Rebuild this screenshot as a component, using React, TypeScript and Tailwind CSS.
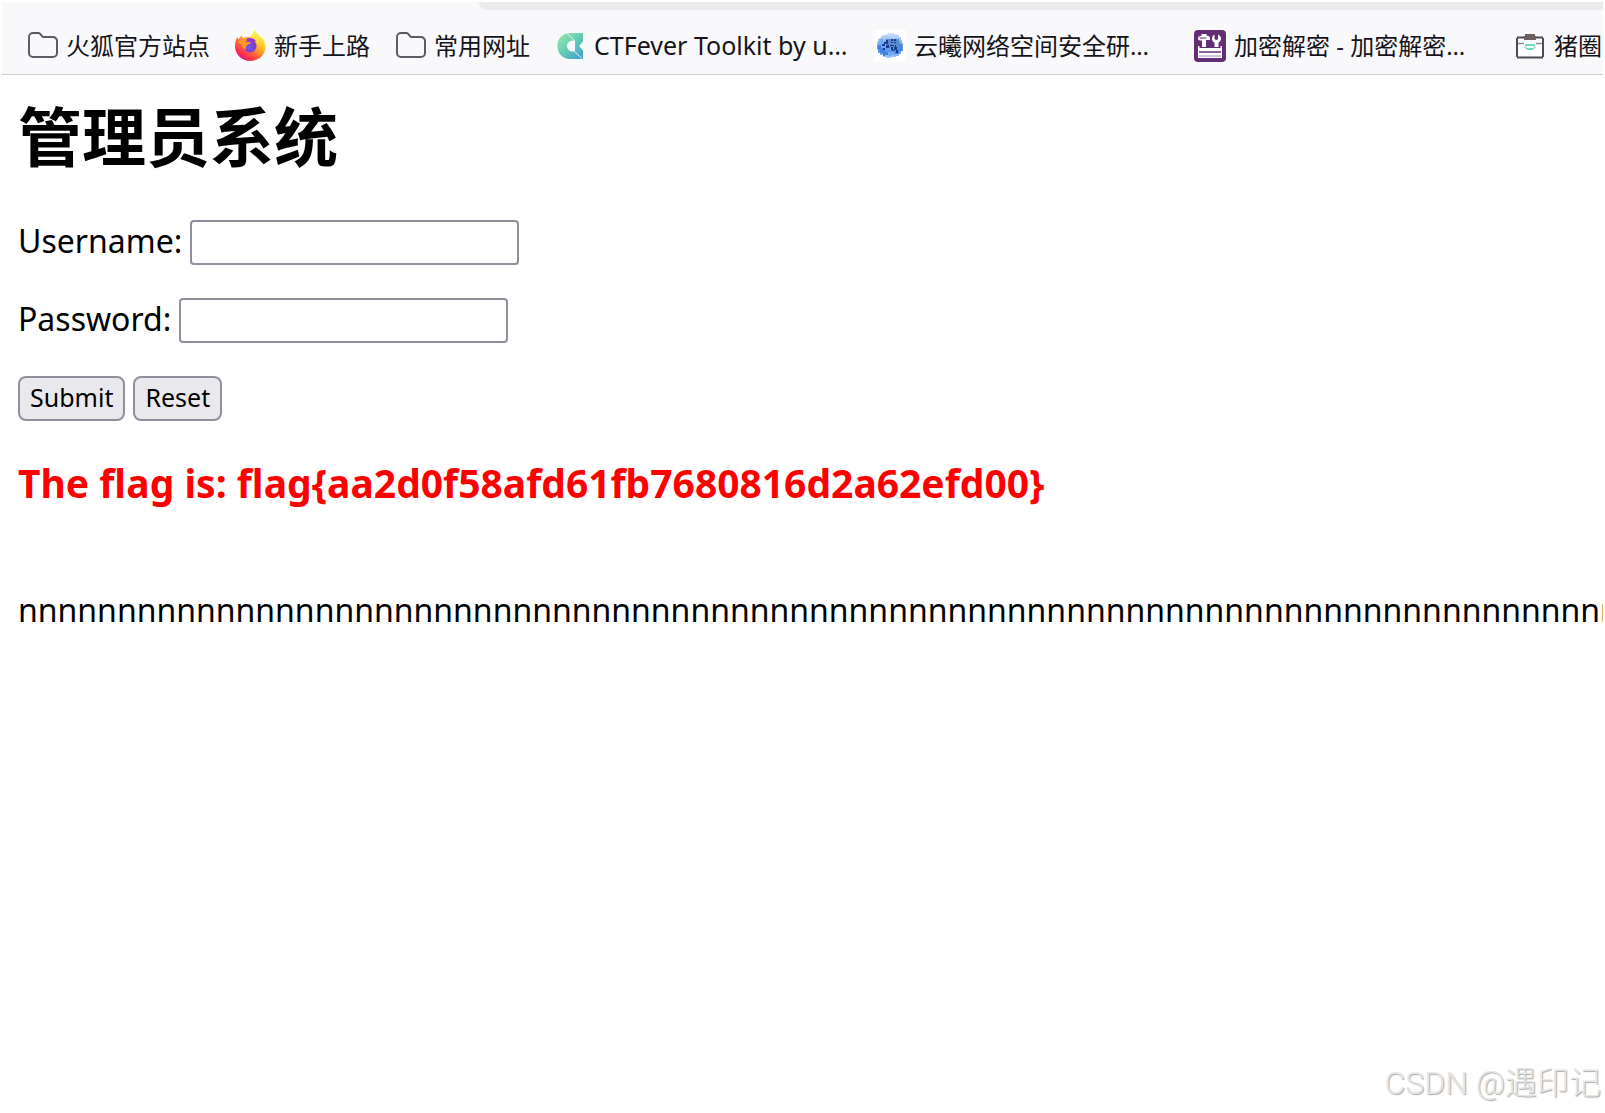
import type { ReactNode } from 'react';

function FolderIcon() {
    return (
        <svg viewBox="0 0 32 32" className="size-8" fill="none" aria-hidden="true">
            <path
                d="M7 3h5.2c.8 0 1.5.3 2 .9l2.2 2.7c.3.3.6.4 1 .4H27a4 4 0 0 1 4 4v12a4 4 0 0 1-4 4H7a4 4 0 0 1-4-4V7a4 4 0 0 1 4-4Z"
                stroke="#5b5b66"
                strokeWidth="2"
            />
        </svg>
    );
}

function FirefoxIcon() {
    return (
        <svg viewBox="0 0 32 32" className="size-8" aria-hidden="true">
            <defs>
                <linearGradient id="fx-body" x1="26" y1="5" x2="8" y2="29" gradientUnits="userSpaceOnUse">
                    <stop offset="0" stopColor="#fff44f" />
                    <stop offset=".35" stopColor="#ffb52b" />
                    <stop offset=".6" stopColor="#ff6a37" />
                    <stop offset=".85" stopColor="#ff2f4f" />
                    <stop offset="1" stopColor="#e31587" />
                </linearGradient>
                <linearGradient id="fx-flame" x1="22" y1="0" x2="25" y2="26" gradientUnits="userSpaceOnUse">
                    <stop offset="0" stopColor="#fff44f" />
                    <stop offset=".5" stopColor="#ffd83a" />
                    <stop offset="1" stopColor="#ff8a16" />
                </linearGradient>
                <radialGradient id="fx-globe" cx=".45" cy=".6" r=".6">
                    <stop offset="0" stopColor="#6d5cf0" />
                    <stop offset=".6" stopColor="#7a43d8" />
                    <stop offset="1" stopColor="#9a2fc0" />
                </radialGradient>
            </defs>
            <path
                d="M3.500 7c.3 1 .7 1.700 1.200 2.200C5.700 7.600 6.600 6.500 8 5.500c0 1 .3 1.900.9 2.500 2-.9 5.200-1.600 8.300-1.100C18 4.400 19.500 2.200 20.600 0c1.200 2.800 2.800 4.200 4.900 6 .8.700 1.500 1.700 2 2.800.2-.5.1-1.200-.1-1.700 2.500 2.400 4.100 6 4.100 9.700C31.500 25 24.800 31 16.300 31 7.800 31 1 24.700 1 16.300 1 13 1.900 9.600 3.500 7Z"
                fill="url(#fx-body)"
            />
            <path
                d="M20.600 0c1.200 2.800 2.800 4.200 4.900 6 2.600 3 4.200 6.700 3.600 10.700-.5 4-2.700 7.100-6.100 8.900 2.500-3.500 2.900-8 .6-11.200-1.700-2.500-4.500-3.700-6.400-7.500C18 4.400 19.500 2.200 20.600 0Z"
                fill="url(#fx-flame)"
            />
            <circle cx="16" cy="16" r="6.500" fill="url(#fx-globe)" />
            <path
                d="M4 11.500c2.500-2 6-1.500 8 .3 2-.2 3.600 0 5.300.5-1 1.700-3.300 1.700-4.600 3.200-1 1.200-.5 2.800-1 4-2.400-.7-3.800-2.500-3.500-5-1.700-.2-3.500-1.300-4.200-3Z"
                fill="#ff9a28"
            />
            <path d="M12 9.500c3-2.500 8.500-1.500 10.500 2.200-1.700-.8-3.400-.6-4.600.2-1.600-.6-4.700-1-5.900-2.400Z" fill="#9238d0" />
        </svg>
    );
}

function FeverIcon() {
    return (
        <svg viewBox="0 0 32 32" className="size-8" aria-hidden="true">
            <defs>
                <linearGradient id="fever" x1="6" y1="4" x2="28" y2="28" gradientUnits="userSpaceOnUse">
                    <stop offset="0" stopColor="#94e7ab" />
                    <stop offset=".5" stopColor="#62cbb4" />
                    <stop offset="1" stopColor="#3fa2d0" />
                </linearGradient>
            </defs>
            <path
                d="M16 3h13v8.500L25 16l4 4.500V29H16C8.500 29 3.500 23.500 3.500 16S8.500 3 16 3Zm5 7.500h-2.500a5.500 5.500 0 0 0 0 11H21Z"
                fill="url(#fever)"
                fillRule="evenodd"
            />
            <path d="m13 3.500 7.500 7M20.500 21.500l7.500 7" stroke="#e3f7ef" strokeWidth="1" />
        </svg>
    );
}

function CloudLabIcon() {
    return (
        <svg viewBox="0 0 32 32" className="size-8" aria-hidden="true">
            <defs>
                <linearGradient id="cloud" x1="16" y1="3" x2="16" y2="29" gradientUnits="userSpaceOnUse">
                    <stop offset="0" stopColor="#d3e5fc" />
                    <stop offset=".3" stopColor="#8fbaf3" />
                    <stop offset=".7" stopColor="#5b96ec" />
                    <stop offset="1" stopColor="#bcd8fb" />
                </linearGradient>
            </defs>
            <path fill="#fff" d="M0 0h32v32H0z" />
            <path
                d="M9 5h3V4h2V3h6v1h3v1h2v2h2v3h1v3h1v8h-2v3h-2v2h-3v1h-5v1h-5v-1H9v-2H6v-2H4v-4H3v-7h1v-3h1V8h2V6h2Z"
                fill="url(#cloud)"
            />
            <path d="M4 15h3v3h4v4h3v3h-3v1H9v-3H6v-3H4ZM24 12h2v2h2v7h-3v3h-4v-3h3Z" fill="#3f82e6" />
            <path d="M6 9h3v2h3v2H8v2H5v-3h1ZM15 22h5v3h-3v1h-2Z" fill="#76a9f0" />
            <path d="M12 9h13v3h1v7h-3v2h-6v-3h-2v-3h-3Z" fill="#5888d0" />
            <path
                d="M12 10h2v2h-2zM10 12h4v2h-4zM8 14h3v2H8zM12 15h3v3h-3zM9 18h2v2H9zM17 9h2v2h-2zM20 9h2v2h-2zM17 12h2v1h-2zM20 12h2v1h-2zM16 15h4v1h-4zM21 15h1v2h-1zM17 17h2v3h-2zM20 17h3v3h-3zM22 20h2v3h-2zM18 20h2v1h-2z"
                fill="#173c88"
            />
        </svg>
    );
}

function ToolboxIcon() {
    return (
        <svg viewBox="0 0 32 32" className="size-8" aria-hidden="true">
            <rect width="32" height="32" rx="4" fill="#652d73" />
            <g fill="#fff">
                <path d="M4 8c.3-1.500 1.500-2 3.500-2V4h5v1.500c2 .3 3.500 1.200 3.500 2.500v2h-4v7H8v-6.500H6C4.700 10.500 4 9.500 4 8Z" />
                <path d="M20.500 4.500V9l1.700 1.200L24 9V4.500c1.800.8 3 2.300 3 4.200 0 2-1.200 3.300-2.500 4V17h-4v-4.300c-1.500-.7-2.500-2-2.500-4 0-1.900 1-3.400 2.500-4.200Z" />
                <path d="M4 16h1.500v2h21v-2H28v12H4Z" />
            </g>
            <path d="M5.500 8h7" stroke="#652d73" strokeWidth="1" />
            <path d="M5 22h22" stroke="#652d73" strokeWidth="1.500" />
            <path d="M5 26h22" stroke="#a986b1" strokeWidth="1" />
        </svg>
    );
}

function CaseIcon() {
    return (
        <svg viewBox="0 0 32 32" className="size-8" fill="none" aria-hidden="true">
            <path d="M3 7.500h26M3 27.500h26" stroke="#4a4d55" strokeWidth="2" />
            <path d="M3 8v19M29 8v19" stroke="#4a4d55" strokeWidth="2" />
            <path d="M4 9h24v17H4z" fill="#fff" />
            <path d="M4 13.500h6M22 13.500h6" stroke="#85888e" strokeWidth="1.500" />
            <path d="M11 4h10v2h1v4H10V6h1Z" fill="#6b605d" />
            <path d="M11 15h10M13 19h6" stroke="#6fdcb8" strokeWidth="2" />
            <path d="M11 16v2h2v1M21 16v2h-2v1" stroke="#6fdcb8" strokeWidth="1" />
        </svg>
    );
}

interface Bookmark {
    title: string;
    icon: ReactNode;
    className?: string;
}

const bookmarks: Bookmark[] = [
    { title: '火狐官方站点', icon: <FolderIcon /> },
    { title: '新手上路', icon: <FirefoxIcon /> },
    { title: '常用网址', icon: <FolderIcon /> },
    { title: 'CTFever Toolkit by u…', icon: <FeverIcon />, className: 'w-64 text-[25px]' },
    { title: '云曦网络空间安全研…', icon: <CloudLabIcon />, className: 'w-64' },
    { title: '加密解密 - 加密解密…', icon: <ToolboxIcon />, className: 'w-64' },
    { title: '猪圈', icon: <CaseIcon /> },
];

function BookmarksBar() {
    return (
        <header className="overflow-hidden border-b border-[#cccccf] bg-[#f9f9fb]">
            <div className="ml-[477px] h-2 rounded-bl-lg bg-[#ebebed]" />
            <nav className="flex gap-6 px-6 pt-5 pb-3">
                {bookmarks.map((bookmark) => (
                    <a
                        key={bookmark.title}
                        href="#"
                        className="flex h-8 shrink-0 items-center gap-2 text-2xl whitespace-nowrap text-[#15141a]"
                    >
                        {bookmark.icon}
                        <span className={bookmark.className}>{bookmark.title}</span>
                    </a>
                ))}
            </nav>
        </header>
    );
}

const inputClass = 'h-[45px] w-[329px] rounded-sm border-2 border-[#8f8f9d] bg-white px-1 text-[25px]';
const buttonClass = 'h-[45px] rounded-lg border-2 border-[#8f8f9d] bg-[#e9e9ed] px-[10px] pb-1 text-[25px] leading-9';

export default function App() {
    return (
        <div className="relative min-h-screen overflow-hidden bg-white p-0.5 font-['Noto_Sans','Noto_Sans_CJK_SC',sans-serif] text-black">
            <BookmarksBar />
            <main className="overflow-hidden px-4 pt-[19px] text-[32px] leading-[45px]">
                <h1 className="text-[64px] leading-[86px] font-bold">管理员系统</h1>
                <form className="mt-10 flex flex-col gap-[33px]" onSubmit={(e) => e.preventDefault()}>
                    <div className="flex items-center gap-2">
                        <label htmlFor="username" className="pb-1 leading-10">
                            Username:
                        </label>
                        <input id="username" name="username" type="text" className={inputClass} />
                    </div>
                    <div className="flex items-center gap-2">
                        <label htmlFor="password" className="pb-1 leading-10">
                            Password:
                        </label>
                        <input id="password" name="password" type="password" className={inputClass} />
                    </div>
                    <div className="flex items-center gap-2">
                        <button type="submit" className={buttonClass}>
                            Submit
                        </button>
                        <button type="reset" className={buttonClass}>
                            Reset
                        </button>
                    </div>
                </form>
                <h3 className="mt-[37px] text-[39px] leading-[50px] font-bold text-[#ff0000]">
                    The flag is: flag&#123;aa2d0f58afd61fb7680816d2a62efd00&#125;
                </h3>
                <p className="mt-[79px] whitespace-nowrap">{'n'.repeat(81)}</p>
            </main>
            <p className="absolute right-1 bottom-2.5 font-[Roboto,'Noto_Sans_CJK_SC',sans-serif] text-[32px] leading-10 font-light text-[#e6e6e6] [text-shadow:1px_1px_1px_#a8a8a8]">
                CSDN @遇印记
            </p>
        </div>
    );
}
